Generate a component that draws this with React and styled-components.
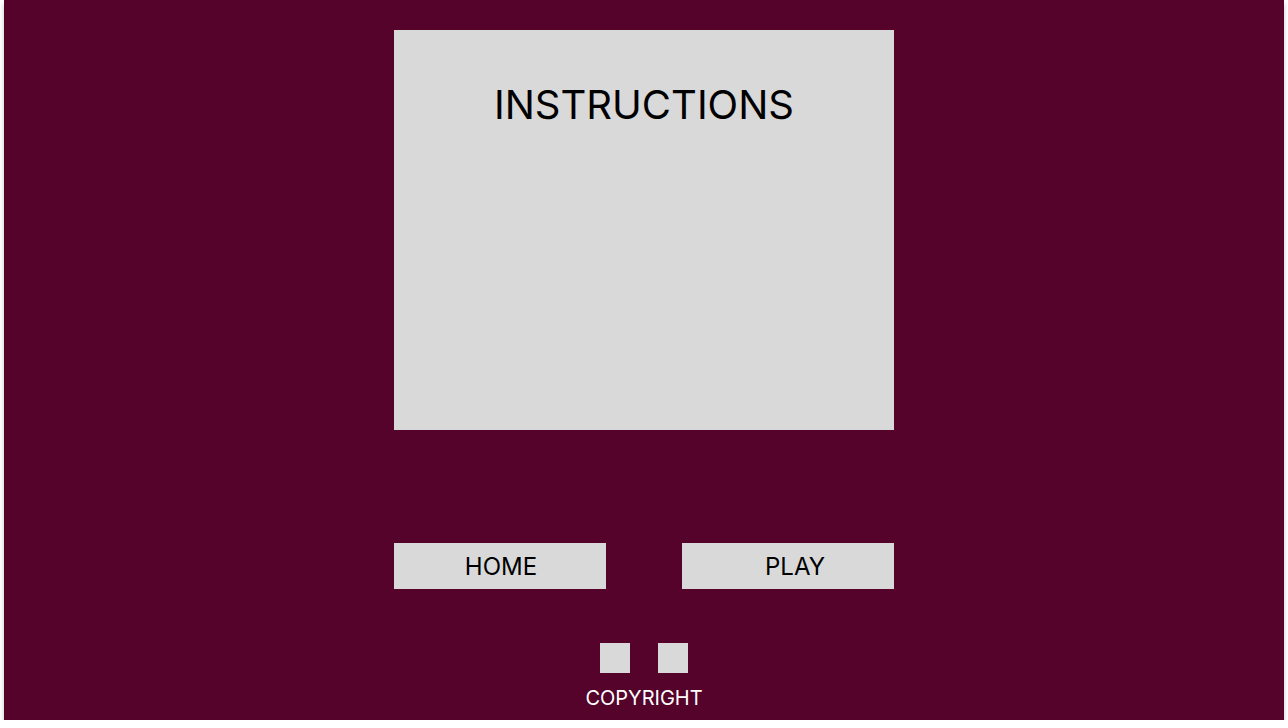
import React from "react";
import styled, { createGlobalStyle } from "styled-components";

const Global = createGlobalStyle`
  html, body { margin: 0; padding: 0; background: #ffffff; }
  body { font-family: Inter, "Noto Sans", sans-serif; }
`;

const Frame = styled.div`
  margin-left: 4px;
  width: 1280px;
  height: 720px;
  background: #55032b;
  box-shadow: 0 4px 4px rgba(0, 0, 0, 0.25);
  display: flex;
  flex-direction: column;
  align-items: center;
  padding-top: 30px;
  box-sizing: border-box;
`;

const Panel = styled.section`
  width: 500px;
  height: 400px;
  background: #d9d9d9;
  display: flex;
  flex-direction: column;
  align-items: center;
  box-sizing: border-box;
  padding-top: 51px;
`;

const Title = styled.h1`
  margin: 0;
  font-family: Inter, sans-serif;
  font-weight: 400;
  font-size: 40px;
  line-height: 48px;
  color: #000;
`;

const ButtonRow = styled.div`
  margin-top: 113px;
  display: flex;
  gap: 76px;
`;

const NavButton = styled.button`
  width: 212px;
  height: 46px;
  border: none;
  background: #d9d9d9;
  font-family: Inter, sans-serif;
  font-size: 24px;
  font-weight: 400;
  color: #000;
  padding: 1px 0 0 ${(p) => p.$shift || 0}px;
  display: flex;
  align-items: center;
  justify-content: center;
`;

const IconRow = styled.div`
  margin-top: 54px;
  display: flex;
  gap: 28px;
`;

const Square = styled.div`
  width: 30px;
  height: 30px;
  background: #d9d9d9;
`;

const Copyright = styled.div`
  margin-top: 13px;
  font-family: Inter, sans-serif;
  font-size: 20px;
  line-height: 24px;
  color: #ffffff;
`;

export default function App() {
  return (
    <>
      <Global />
      <Frame>
        <Panel>
          <Title>INSTRUCTIONS</Title>
        </Panel>
        <ButtonRow>
          <NavButton $shift={2}>HOME</NavButton>
          <NavButton $shift={14}>PLAY</NavButton>
        </ButtonRow>
        <IconRow>
          <Square />
          <Square />
        </IconRow>
        <Copyright>COPYRIGHT</Copyright>
      </Frame>
    </>
  );
}
